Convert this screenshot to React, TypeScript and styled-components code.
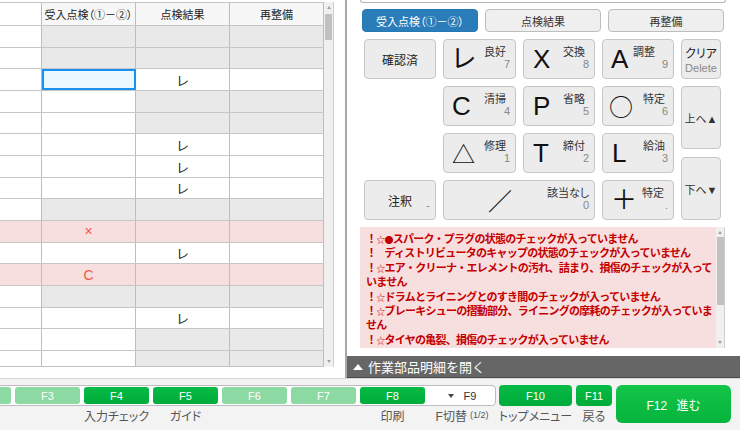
import React from 'react';
import styled, { createGlobalStyle, css } from 'styled-components';

//global
const GlobalStyle = createGlobalStyle`
  html, body {
    margin: 0;
    padding: 0;
    background: #fff;
  }
  body {
    font-family: "Liberation Sans", "Noto Sans CJK JP", sans-serif;
    color: #333;
  }
  * {
    box-sizing: border-box;
  }
`;

const Screen = styled.div`
  width: 740px;
  height: 430px;
  display: flex;
  flex-direction: column;
  overflow: hidden;
`;

const Main = styled.div`
  flex: none;
  height: 378px;
  display: flex;
`;

//left pane: inspection table
const TablePane = styled.div`
  flex: none;
  width: 347px;
  padding-top: 2px;
  border-right: 2px solid #a8a8a8;
  display: flex;
  align-items: flex-start;
`;

const Sheet = styled.div`
  width: 324px;
  height: 365px;
  overflow: hidden;
  border-top: 1px solid #c4c4c4;
  border-bottom: 1px solid #c4c4c4;
`;

const SheetRow = styled.div<{ $head?: boolean }>`
  display: grid;
  grid-template-columns: 42px 94px 94px 94px;
  height: ${({ $head }) => ($head ? '23px' : '21.67px')};
  border-bottom: 1px solid #c6c6c6;
`;

type Tone = 'plain' | 'shade' | 'alert' | 'head';

const toneColor: Record<Tone, string> = {
  plain: '#fff',
  shade: '#e9e9e9',
  alert: '#f8dfdf',
  head: '#f7f7f7',
};

const Cell = styled.div<{ $tone: Tone; $selected?: boolean; $red?: boolean }>`
  position: relative;
  border-right: 1px solid #bdbdbd;
  display: flex;
  align-items: center;
  justify-content: center;
  white-space: nowrap;
  font-size: ${({ $tone, $red }) => ($tone === 'head' ? '11px' : $red ? '14px' : '13px')};
  font-feature-settings: "palt";
  color: ${({ $red }) => ($red ? '#f0563e' : '#222')};
  background: ${({ $tone }) => toneColor[$tone]};
  ${({ $selected }) =>
    $selected &&
    css`
      background: #e9f9ff;
      outline: 2px solid #1a91f0;
      outline-offset: -2px;
    `}
`;

const Track = styled.div<{ $height: number; $width: number }>`
  flex: none;
  width: ${({ $width }) => $width}px;
  height: ${({ $height }) => $height}px;
  background: #f0f0f0;
  border-right: 1px solid #cfcfcf;
  display: flex;
  flex-direction: column;
  align-items: center;
`;

const Arrow = styled.div<{ $down?: boolean }>`
  flex: none;
  margin: ${({ $down }) => ($down ? 'auto 0 4px' : '4px 0 0')};
  width: 0;
  height: 0;
  border-left: 2.5px solid transparent;
  border-right: 2.5px solid transparent;
  ${({ $down }) =>
    $down ? 'border-top: 3px solid #a0a0a0;' : 'border-bottom: 3px solid #a0a0a0;'}
`;

const Thumb = styled.div<{ $top: number; $size: number }>`
  flex: none;
  width: 7px;
  margin-top: ${({ $top }) => $top}px;
  height: ${({ $size }) => $size}px;
  background: #c1c1c1;
`;

//right pane
const SidePane = styled.div`
  flex: 1;
  display: flex;
  flex-direction: column;
`;

const SideBody = styled.div`
  flex: 1;
  padding: 0 14px 0 13px;
  display: flex;
  flex-direction: column;
`;

const InputStub = styled.div`
  height: 3px;
  border: 1px solid #b4b4b4;
  border-top: none;
  border-radius: 0 0 3px 3px;
`;

const Tabs = styled.div`
  margin-top: 6px;
  padding: 0 2px;
  display: grid;
  grid-template-columns: repeat(3, 1fr);
  gap: 7px;
`;

const Tab = styled.div<{ $active?: boolean }>`
  height: 23px;
  display: flex;
  align-items: center;
  justify-content: center;
  border-radius: 4px;
  font-size: 11px;
  font-feature-settings: "palt";
  border: 1px solid ${({ $active }) => ($active ? '#2479b5' : '#bdbdbd')};
  background: ${({ $active }) => ($active ? '#2a7db9' : '#efefef')};
  color: ${({ $active }) => ($active ? '#fff' : '#333')};
`;

const Keypad = styled.div`
  margin-top: 7px;
  padding-left: 4px;
  display: grid;
  grid-template-columns: 72px 73px 72px 72px 40px;
  grid-template-rows: repeat(4, 40px);
  gap: 7px;
`;

const Key = styled.div<{ $area: string; $center?: boolean }>`
  grid-area: ${({ $area }) => $area};
  position: relative;
  display: flex;
  align-items: center;
  justify-content: ${({ $center }) => ($center ? 'center' : 'flex-start')};
  flex-direction: ${({ $center }) => ($center ? 'column' : 'row')};
  padding-left: ${({ $center }) => ($center ? '0' : '8px')};
  border: 1px solid #c6c6c6;
  border-radius: 4px;
  background: #ececec;
  color: #222;
  font-size: 12px;
  font-feature-settings: "palt";
`;

const Glyph = styled.span<{ $shift?: number; $size?: number; $cjk?: boolean }>`
  margin-left: ${({ $shift }) => $shift ?? 0}px;
  font-size: ${({ $size }) => $size ?? 26}px;
  ${({ $cjk }) => $cjk && 'font-family: "Noto Sans CJK JP", sans-serif;'}
  line-height: 1;
  color: #111;
`;

const KeyLabel = styled.span<{ $left?: number }>`
  position: absolute;
  top: 6px;
  left: ${({ $left }) => $left ?? 39}px;
  font-size: 11px;
  line-height: 13px;
  color: #333;
`;

const KeyNum = styled.span`
  position: absolute;
  right: 5px;
  bottom: 7px;
  font-size: 11px;
  line-height: 13px;
  color: #888;
`;

const SubText = styled.span`
  font-size: 11px;
  line-height: 14px;
  color: #8a8a8a;
`;

const NavStack = styled.div`
  grid-area: 2 / 5 / 5 / 6;
  display: flex;
  flex-direction: column;
  gap: 8px;
`;

const NavKey = styled.div`
  flex: 1;
  display: flex;
  align-items: center;
  justify-content: center;
  border: 1px solid #c6c6c6;
  border-radius: 4px;
  background: #ececec;
  font-size: 11px;
  color: #333;
`;

const MessageBox = styled.div`
  margin-top: 7px;
  margin-right: 1px;
  height: 121px;
  display: flex;
  background: #f8dfdf;
`;

const MessageList = styled.div`
  flex: 1;
  padding: 4px 0 0 6px;
  overflow: hidden;
  font-size: 11px;
  font-weight: bold;
  letter-spacing: -0.75px;
  line-height: 14.4px;
  color: #c40000;
  font-family: "Noto Sans CJK JP", sans-serif;
`;

const Message = styled.div`
  height: auto;
`;

const Star = styled.span`
  font-size: 9px;
  font-weight: normal;
  line-height: 0;
`;

const DetailBar = styled.div`
  flex: none;
  margin-top: 8px;
  height: 22px;
  padding-left: 6px;
  display: flex;
  align-items: center;
  gap: 5px;
  background: #666;
  border-bottom: 1px solid #4a4a4a;
  color: #fff;
  font-size: 13px;
`;

const BarArrow = styled.span`
  width: 0;
  height: 0;
  border-left: 5px solid transparent;
  border-right: 5px solid transparent;
  border-bottom: 6px solid #fff;
`;

//footer: function keys
const Footer = styled.footer`
  flex: none;
  height: 52px;
  background: #f3f3f3;
  border-top: 1px solid #d6d6d6;
  padding-top: 6px;
  overflow: hidden;
`;

const FGrid = styled.div`
  display: grid;
  grid-template-columns: repeat(8, 65px) 66px 73px 36px 115px;
  grid-template-rows: 21px 18px;
  column-gap: 4px;
  margin-left: -123px;
`;

const FStrip = styled.div`
  grid-area: 1 / 1 / 2 / 10;
  margin: 0 -1px 0 -3px;
  border: 1px solid #bcbcbc;
  border-radius: 4px;
  background: #fff;
`;

const FKey = styled.div<{ $col: number; $on?: boolean; $solo?: boolean }>`
  grid-column: ${({ $col }) => $col};
  grid-row: 1;
  margin: ${({ $solo }) => ($solo ? '0' : '2px 0')};
  display: flex;
  align-items: center;
  justify-content: center;
  border-radius: ${({ $solo }) => ($solo ? '4px' : '3px')};
  background: ${({ $on }) => ($on ? 'linear-gradient(#06bb45, #00ab3a)' : '#8cd9a3')};
  color: #fff;
  font-size: 11px;
`;

const FSwitch = styled.div`
  grid-column: 9;
  grid-row: 1;
  display: flex;
  align-items: center;
  justify-content: center;
  gap: 10px;
  font-size: 11px;
  color: #333;
`;

const Caret = styled.span`
  width: 0;
  height: 0;
  border-left: 3.5px solid transparent;
  border-right: 3.5px solid transparent;
  border-top: 4px solid #444;
`;

const FMain = styled.div`
  grid-column: 12;
  grid-row: 1 / 3;
  margin-bottom: 1px;
  display: flex;
  align-items: center;
  justify-content: center;
  border-radius: 6px;
  background: linear-gradient(#13c548, #05b43c);
  color: #fff;
  font-size: 12px;
  word-spacing: 6px;
`;

const Caption = styled.div<{ $col: number }>`
  grid-column: ${({ $col }) => $col};
  grid-row: 2;
  display: flex;
  align-items: center;
  justify-content: center;
  white-space: nowrap;
  font-size: 12px;
  color: #555;
  font-feature-settings: "palt";
`;

const Small = styled.small`
  margin-left: 3px;
  font-size: 9px;
`;

//data
type RowKind = 'shade' | 'half' | 'current' | 'check' | 'cross' | 'clean';
const rows: RowKind[] = [
  'shade', 'shade', 'current', 'half', 'half', 'check', 'check', 'check',
  'shade', 'cross', 'check', 'clean', 'shade', 'check', 'half', 'half',
];

const messages: { star: string; text: string }[] = [
  { star: '☆●', text: 'スパーク・プラグの状態のチェックが入っていません' },
  { star: '　', text: 'ディストリビュータのキャップの状態のチェックが入っていません' },
  { star: '☆', text: 'エア・クリーナ・エレメントの汚れ、詰まり、損傷のチェックが入っていません' },
  { star: '☆', text: 'ドラムとライニングとのすき間のチェックが入っていません' },
  { star: '☆', text: 'ブレーキシューの摺動部分、ライニングの摩耗のチェックが入っていません' },
  { star: '☆', text: 'タイヤの亀裂、損傷のチェックが入っていません' },
  { star: '☆', text: 'ホイール・ナットの緩みのチェックが入っていません' },
];

const renderRow = (kind: RowKind, i: number) => {
  const alert = kind === 'cross' || kind === 'clean';
  const base: Tone = alert ? 'alert' : 'plain';
  const t2: Tone = kind === 'shade' ? 'shade' : base;
  const t34: Tone = kind === 'shade' || kind === 'half' ? 'shade' : base;
  return (
    <SheetRow key={i}>
      <Cell $tone={base} />
      <Cell $tone={t2} $selected={kind === 'current'} $red={alert}>
        {kind === 'cross' ? '×' : kind === 'clean' ? 'C' : ''}
      </Cell>
      <Cell $tone={t34}>{kind === 'check' || kind === 'current' ? 'レ' : ''}</Cell>
      <Cell $tone={t34} />
    </SheetRow>
  );
};

const App: React.FC = () => {
  return (
    <Screen>
      <GlobalStyle />
      <Main>
        <TablePane>
          <Sheet>
            <SheetRow $head>
              <Cell $tone="plain" />
              <Cell $tone="head">受入点検（①－②）</Cell>
              <Cell $tone="head">点検結果</Cell>
              <Cell $tone="head">再整備</Cell>
            </SheetRow>
            {rows.map(renderRow)}
          </Sheet>
          <Track $height={365} $width={10}>
            <Arrow />
            <Thumb $top={5} $size={26} />
            <Arrow $down />
          </Track>
        </TablePane>

        <SidePane>
          <SideBody>
            <InputStub />
            <Tabs>
              <Tab $active>受入点検（①－②）</Tab>
              <Tab>点検結果</Tab>
              <Tab>再整備</Tab>
            </Tabs>

            <Keypad>
              <Key $area="1 / 1" $center>確認済</Key>
              <Key $area="1 / 2"><Glyph>レ</Glyph><KeyLabel $left={40}>良好</KeyLabel><KeyNum>7</KeyNum></Key>
              <Key $area="1 / 3"><Glyph $shift={1}>X</Glyph><KeyLabel>交換</KeyLabel><KeyNum>8</KeyNum></Key>
              <Key $area="1 / 4"><Glyph>A</Glyph><KeyLabel $left={30}>調整</KeyLabel><KeyNum>9</KeyNum></Key>
              <Key $area="1 / 5" $center>クリア<SubText>Delete</SubText></Key>

              <Key $area="2 / 2"><Glyph>C</Glyph><KeyLabel $left={40}>清掃</KeyLabel><KeyNum>4</KeyNum></Key>
              <Key $area="2 / 3"><Glyph $shift={1}>P</Glyph><KeyLabel>省略</KeyLabel><KeyNum>5</KeyNum></Key>
              <Key $area="2 / 4"><Glyph $cjk $size={24} $shift={-2}>○</Glyph><KeyLabel $left={40}>特定</KeyLabel><KeyNum>6</KeyNum></Key>

              <Key $area="3 / 2"><Glyph $cjk $size={23}>△</Glyph><KeyLabel $left={40}>修理</KeyLabel><KeyNum>1</KeyNum></Key>
              <Key $area="3 / 3"><Glyph $shift={1}>T</Glyph><KeyLabel>締付</KeyLabel><KeyNum>2</KeyNum></Key>
              <Key $area="3 / 4"><Glyph $shift={1}>L</Glyph><KeyLabel $left={40}>給油</KeyLabel><KeyNum>3</KeyNum></Key>

              <Key $area="4 / 1" $center>注釈<KeyNum>-</KeyNum></Key>
              <Key $area="4 / 2 / 5 / 4"><Glyph $cjk $size={24} $shift={36}>／</Glyph><KeyLabel $left={103}>該当なし</KeyLabel><KeyNum>0</KeyNum></Key>
              <Key $area="4 / 4"><Glyph>＋</Glyph><KeyLabel>特定</KeyLabel><KeyNum>.</KeyNum></Key>

              <NavStack>
                <NavKey>上へ▲</NavKey>
                <NavKey>下へ▼</NavKey>
              </NavStack>
            </Keypad>

            <MessageBox>
              <MessageList>
                {messages.map((m, i) => (
                  <Message key={i}>
                    ！<Star>{m.star}</Star>
                    {m.text}
                  </Message>
                ))}
              </MessageList>
              <Track $height={121} $width={9}>
                <Arrow />
                <Thumb $top={3} $size={68} />
                <Arrow $down />
              </Track>
            </MessageBox>
          </SideBody>
          <DetailBar>
            <BarArrow />
            作業部品明細を開く
          </DetailBar>
        </SidePane>
      </Main>

      <Footer>
        <FGrid>
          <FStrip />
          {[1, 2, 3, 4, 5, 6, 7, 8].map((n) => (
            <FKey key={n} $col={n} $on={n === 4 || n === 5 || n === 8}>
              F{n}
            </FKey>
          ))}
          <FSwitch>
            <Caret />
            F9
          </FSwitch>
          <FKey $col={10} $on $solo>F10</FKey>
          <FKey $col={11} $on $solo>F11</FKey>
          <FMain>F12 進む</FMain>

          <Caption $col={4}>入力チェック</Caption>
          <Caption $col={5}>ガイド</Caption>
          <Caption $col={8}>印刷</Caption>
          <Caption $col={9}>
            F切替<Small>(1/2)</Small>
          </Caption>
          <Caption $col={10}>トップメニュー</Caption>
          <Caption $col={11}>戻る</Caption>
        </FGrid>
      </Footer>
    </Screen>
  );
};

export default App;
